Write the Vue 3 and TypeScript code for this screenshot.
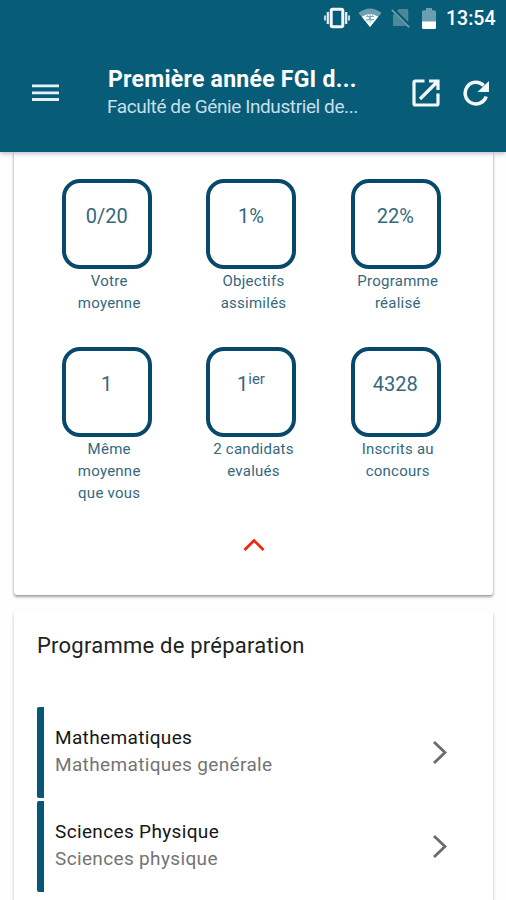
<script setup lang="ts">
interface Stat {
  value: string
  sup?: string
  label: string[]
}

interface Subject {
  title: string
  detail: string
}

const stats: Stat[] = [
  { value: '0/20', label: ['Votre', 'moyenne'] },
  { value: '1%', label: ['Objectifs', 'assimilés'] },
  { value: '22%', label: ['Programme', 'réalisé'] },
  { value: '1', label: ['Même', 'moyenne', 'que vous'] },
  { value: '1', sup: 'ier', label: ['2 candidats', 'evalués'] },
  { value: '4328', label: ['Inscrits au', 'concours'] },
]

const subjects: Subject[] = [
  { title: 'Mathematiques', detail: 'Mathematiques genérale' },
  { title: 'Sciences Physique', detail: 'Sciences physique' },
]
</script>

<template>
  <div class="screen">
    <header class="header">
      <div class="status">
        <svg class="vibrate" width="28" height="22" viewBox="0 0 28 22">
          <rect x="8.2" y="2.2" width="11.600" height="17.6" rx="1.5" fill="none" stroke="#f4fafc" stroke-width="3" />
          <path d="M4.8 5v12M23.2 5v12" stroke="#e4f0f4" stroke-width="2.2" />
          <path d="M2 8.5v5M26 8.5v5" stroke="#d5e6ec" stroke-width="1.8" />
        </svg>
        <svg class="wifi" width="24" height="20" viewBox="0 0 24 20">
          <path d="M12 19L0.500 5Q12-4 23.500 5Z" fill="#6b9fb0" />
          <path d="M12 19L3.800 8.800Q12 3 20.200 8.800Z" fill="#fff" />
          <path d="M8 8.500h8M8 11.500h8M12 6v9M9 7l6 6.500M15 7l-6 6.500" stroke="#6b9fb0" stroke-width=".8" />
        </svg>
        <svg class="sim" width="20" height="20" viewBox="0 0 20 20">
          <path d="M8 1h8q1.3 0 1.3 1.3V18H2V7Z" fill="#4f879b" />
          <path d="M1.6 1.2L19 18.7" stroke="#075d78" stroke-width="4" />
          <path d="M.8 1.8L18.2 19.3" stroke="#6b9fb0" stroke-width="1.7" />
        </svg>
        <svg class="battery" width="14" height="21" viewBox="0 0 14 21">
          <path d="M4 0h6v2.2h2.5Q14 2.2 14 3.7V14H0V3.7Q0 2.2 1.5 2.2H4Z" fill="#6b9fb0" />
          <path d="M0 13.5h14v6q0 1.5-1.5 1.5h-11Q0 21 0 19.500Z" fill="#fff" />
        </svg>
        <span class="clock">13:54</span>
      </div>
      <div class="toolbar">
        <button class="icon menu" aria-label="Menu">
          <svg width="28" height="18" viewBox="0 0 28 18">
            <path d="M0 1.800h27M0 8.800h27M0 15.500h27" stroke="#e4f1f7" stroke-width="2.800" />
          </svg>
        </button>
        <div class="titles">
          <h1>Première année FGI d...</h1>
          <p>Faculté de Génie Industriel de...</p>
        </div>
        <button class="icon open" aria-label="Ouvrir">
          <svg width="28" height="28" viewBox="0 0 28 28">
            <path d="M12.500 2H3.200Q2 2 2 3.200V24.800Q2 26 3.200 26H24.800Q26 26 26 24.800V14.500" fill="none" stroke="#f2f8fb" stroke-width="3.200" />
            <path d="M17 2H26V11M25.500 2.500L8 20" fill="none" stroke="#f2f8fb" stroke-width="3.200" />
          </svg>
        </button>
        <button class="icon" aria-label="Actualiser">
          <svg width="26" height="26" viewBox="0 0 26 26">
            <path d="M23.200 16.500A10.800 10.800 0 1 1 20.600 5.500" fill="none" stroke="#f2f8fb" stroke-width="3.500" />
            <path d="M26 1V12H14.500Z" fill="#f2f8fb" />
          </svg>
        </button>
      </div>
    </header>

    <main class="content">
      <section class="card summary">
        <div class="stats">
          <div v-for="(stat, i) in stats" :key="i" class="stat">
            <div class="box">
              <span>{{ stat.value }}<sup v-if="stat.sup">{{ stat.sup }}</sup></span>
            </div>
            <div class="label">
              <div v-for="line in stat.label" :key="line">{{ line }}</div>
            </div>
          </div>
        </div>
        <svg class="collapse" width="22" height="13" viewBox="0 0 22 13">
          <path d="M1.500 11L11 1.500L20.500 11" fill="none" stroke="#f5200c" stroke-width="2.600" />
        </svg>
      </section>

      <section class="card programme">
        <h2>Programme de préparation</h2>
        <ul>
          <li v-for="subject in subjects" :key="subject.title">
            <div class="subject">
              <strong>{{ subject.title }}</strong>
              <span>{{ subject.detail }}</span>
            </div>
            <svg width="16" height="24" viewBox="0 0 16 24">
              <path d="M2 1L13 11.500L2 22" fill="none" stroke="#6b6b6b" stroke-width="2.800" />
            </svg>
          </li>
        </ul>
      </section>
    </main>
  </div>
</template>

<style>
body {
  margin: 0;
  overflow: hidden;
}
</style>

<style scoped>
.screen {
  display: flex;
  flex-direction: column;
  height: 900px;
  overflow: hidden;
  background: #fefefe;
  font-family: Roboto, "Liberation Sans", sans-serif;
}
.header {
  position: relative;
  z-index: 1;
  flex: none;
  height: 152px;
  background: #075d78;
  color: #fff;
  box-shadow: 0 1px 5px rgba(50, 50, 110, 0.4);
}
.status {
  display: flex;
  align-items: center;
  justify-content: flex-end;
  height: 36px;
  padding-right: 10px;
}
.wifi { margin-left: 7px; }
.sim { margin-left: 9px; }
.battery { margin-left: 11px; }
.clock {
  width: 50px;
  margin-left: 10px;
  font-size: 19.500px;
  font-weight: 500;
  line-height: 24px;
  padding-top: 2px;
}
.toolbar {
  display: flex;
  align-items: center;
  height: 114px;
  box-sizing: border-box;
  padding: 0 17px 0 32px;
}
.icon {
  display: flex;
  padding: 0;
  border: 0;
  background: none;
}
.titles {
  flex: 1;
  padding: 0 0 1px 48px;
  white-space: nowrap;
}
h1, h2, p, ul { margin: 0; padding: 0; }
h1 {
  font-size: 23px;
  font-weight: 700;
  line-height: 28px;
  letter-spacing: 0.260px;
}
p {
  margin-left: -1px;
  color: #c9dfe8;
  font-size: 19px;
  line-height: 25px;
  letter-spacing: -0.400px;
}
.open { margin-right: 23px; }
.content {
  flex: 1;
  min-height: 0;
  padding: 0 13px 0 14px;
}
.card {
  box-sizing: border-box;
  background: #fff;
}
.summary {
  display: flex;
  flex-direction: column;
  align-items: center;
  height: 443px;
  padding-top: 27px;
  border-radius: 0 0 3px 3px;
  box-shadow: 0 2px 3px rgba(0, 0, 0, 0.36), 0 0 2px rgba(0, 0, 0, 0.2);
}
.stats {
  display: grid;
  grid-template-columns: repeat(3, 144.300px);
  grid-template-rows: 167.500px 192.500px;
  margin-right: 1px;
  color: #35687e;
}
.stat {
  display: flex;
  flex-direction: column;
  align-items: center;
}
.box {
  box-sizing: border-box;
  width: 90px;
  height: 90px;
  margin-right: 3px;
  padding: 21px 1px 0 0;
  border: 4px solid #07496a;
  border-radius: 18px;
  font-size: 20px;
  line-height: 24px;
  text-align: center;
}
sup {
  font-size: 15px;
  line-height: 0;
  vertical-align: 7px;
}
.label {
  padding-left: 1px;
  margin-top: 1px;
  font-size: 15px;
  letter-spacing: 0.25px;
  line-height: 22.300px;
  text-align: center;
}
.programme {
  height: 310px;
  margin-top: 17px;
  padding: 20px 23px 0;
  box-shadow: 0 2px 3px rgba(0, 0, 0, 0.25);
}
h2 {
  color: #222;
  font-size: 22px;
  font-weight: 400;
  line-height: 28px;
  letter-spacing: 0.230px;
}
ul {
  display: flex;
  flex-direction: column;
  gap: 3px;
  padding-top: 47px;
  list-style: none;
}
li {
  display: flex;
  align-items: center;
  justify-content: space-between;
  box-sizing: border-box;
  height: 91px;
  padding: 0 22px 0 11px;
  border-left: 7px solid #075878;
  border-radius: 2px;
}
.subject {
  display: flex;
  flex-direction: column;
  padding-bottom: 4px;
  font-size: 19px;
  line-height: 27px;
  letter-spacing: 0.350px;
}
.subject strong {
  color: #161616;
  font-weight: 400;
}
.subject span { color: #747474; }
</style>
